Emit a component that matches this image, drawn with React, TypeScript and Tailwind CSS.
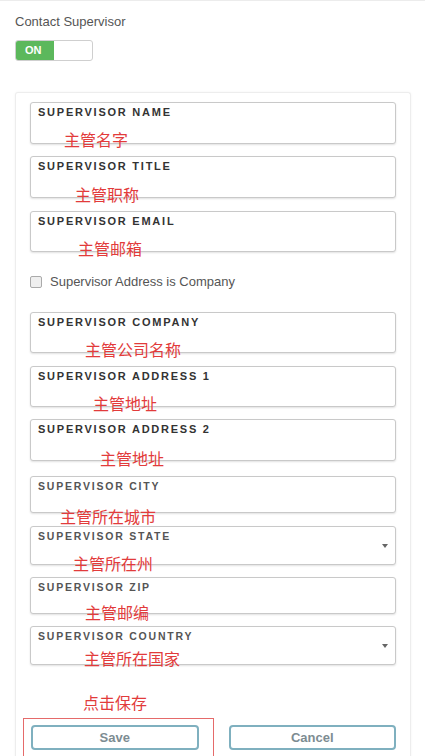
import React from "react";

type FieldProps = {
  label: string;
  note: string;
  noteLeft: number;
  noteTop: number;
  height: string;
  mt: string;
  select?: boolean;
  light?: boolean;
};

const Field = ({ label, note, noteLeft, noteTop, height, mt, select, light }: FieldProps) => {
  return (
    <div
      className={`relative ${height} ${mt} rounded-[3px] border border-[#c9c9c9] bg-white shadow-[0_1px_2px_rgba(0,0,0,0.12)]`}
    >
      <div
        className={`px-[7px] pt-[2px] font-bold uppercase leading-[14px] ${
          light ? "text-[10.5px] tracking-[0.17em] text-[#555]" : "text-[11px] tracking-[0.16em] text-[#333]"
        }`}
      >
        {label}
      </div>
      {select && (
        <div className="absolute right-[7px] top-1/2 -translate-y-1/2 h-0 w-0 border-x-[3px] border-t-[4px] border-x-transparent border-t-[#666]" />
      )}
      {/* red annotation laid over the field */}
      <span
        className="absolute whitespace-nowrap text-[16px] leading-4 text-[#e23b3b]"
        style={{ left: noteLeft, top: noteTop, fontFamily: '"Noto Sans CJK SC", sans-serif' }}
      >
        {note}
      </span>
    </div>
  );
};

const App = () => {
  return (
    <div
      className="h-[756px] w-[425px] overflow-hidden border-t border-[#ececec] bg-white pl-[15px] pr-[14px] pt-[13px]"
      style={{ fontFamily: '"Liberation Sans", Arial, sans-serif' }}
    >
      <div className="text-[13px] leading-4 text-[#555]">Contact Supervisor</div>

      {/* toggle */}
      <div className="mt-[10px] flex h-[21px] w-[78px] overflow-hidden rounded-[3px] border border-[#cfcfcf] bg-white">
        <div className="flex w-[38px] items-center bg-[#5cb85c] pl-[9px] text-[11px] font-bold text-white">
          ON
        </div>
      </div>

      <div className="mt-[31px] rounded-t-[3px] border-x border-t border-[#ededed] pb-[40px] pl-[14px] pr-[14px] pt-[9px] shadow-[0_0_3px_rgba(0,0,0,0.05)]">
        <Field label="Supervisor Name" note="主管名字" noteLeft={33} noteTop={28} height="h-[42px]" mt="mt-0" />
        <Field label="Supervisor Title" note="主管职称" noteLeft={44} noteTop={29} height="h-[42px]" mt="mt-[12px]" />
        <Field label="Supervisor Email" note="主管邮箱" noteLeft={47} noteTop={28} height="h-[41px]" mt="mt-[13px]" />

        <label className="mt-[20px] flex h-[20px] items-center gap-[8px]">
          <span className="h-[12px] w-[12px] rounded-[2px] border border-[#aaa] bg-[#efefef]" />
          <span className="text-[13px] text-[#555]">Supervisor Address is Company</span>
        </label>

        <Field label="Supervisor Company" note="主管公司名称" noteLeft={54} noteTop={28} height="h-[41px]" mt="mt-[20px]" />
        <Field label="Supervisor Address 1" note="主管地址" noteLeft={62} noteTop={28} height="h-[41px]" mt="mt-[13px]" />
        <Field label="Supervisor Address 2" note="主管地址" noteLeft={69} noteTop={30} height="h-[42px]" mt="mt-[12px]" />

        <Field label="Supervisor City" note="主管所在城市" noteLeft={29} noteTop={31} height="h-[37px]" mt="mt-[15px]" light />
        <Field label="Supervisor State" note="主管所在州" noteLeft={42} noteTop={28} height="h-[39px]" mt="mt-[13px]" light select />
        <Field label="Supervisor Zip" note="主管邮编" noteLeft={54} noteTop={26} height="h-[37px]" mt="mt-[12px]" light />
        <Field label="Supervisor Country" note="主管所在国家" noteLeft={53} noteTop={23} height="h-[39px]" mt="mt-[12px]" light select />

        <div
          className="mt-[29px] pl-[53px] text-[16px] leading-4 text-[#e23b3b]"
          style={{ fontFamily: '"Noto Sans CJK SC", sans-serif' }}
        >
          点击保存
        </div>

        <div className="mt-[15px] flex gap-[30px] pl-[1px]">
          <div className="relative flex-1">
            <div className="absolute -left-[8px] -right-[15px] -top-[7px] h-[60px] border border-[#e56a6a]" />
            <button className="h-[25px] w-full rounded-[4px] border-2 border-[#7fb0bf] bg-white text-[13px] font-bold text-[#7d8c92]">
              Save
            </button>
          </div>
          <div className="flex-1">
            <button className="h-[25px] w-full rounded-[4px] border-2 border-[#7fb0bf] bg-white text-[13px] font-bold text-[#7d8c92]">
              Cancel
            </button>
          </div>
        </div>
      </div>
    </div>
  );
};

export default App;
